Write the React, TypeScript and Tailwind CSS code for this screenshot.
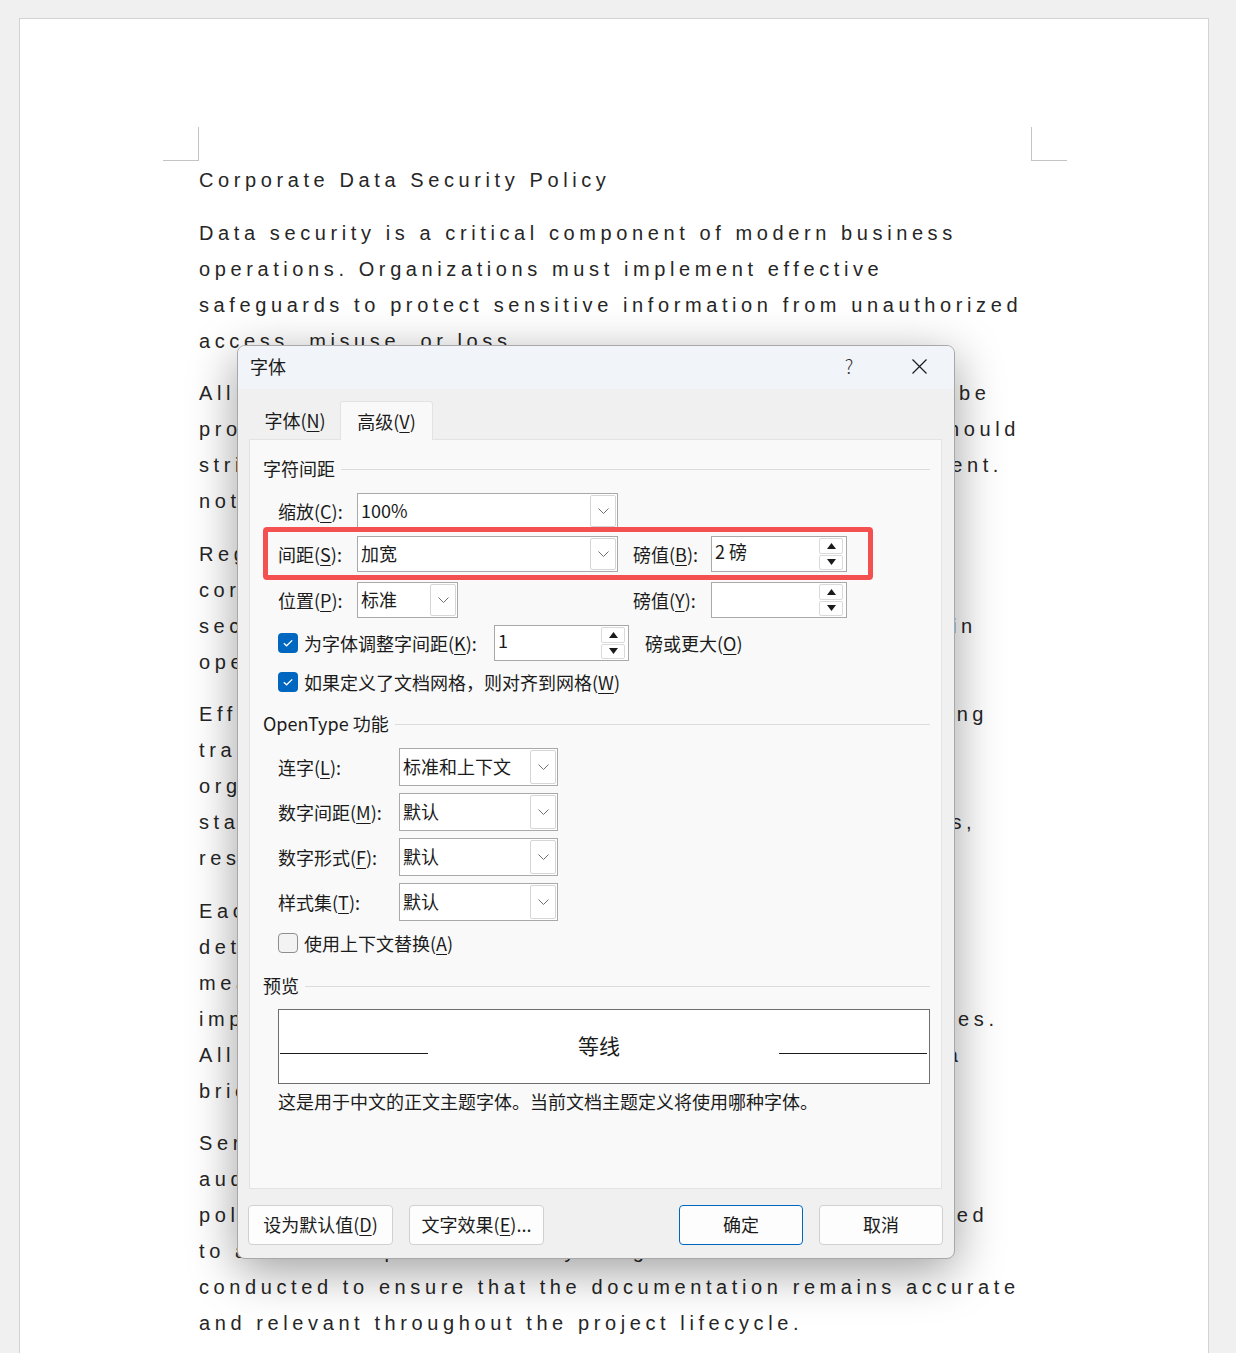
import React from "react";

const paragraphs: string[][] = [
  [
    "Data security is a critical component of modern business",
    "operations. Organizations must implement effective",
    "safeguards to protect sensitive information from unauthorized",
    "access, misuse, or loss.",
  ],
  [
    "All sensitive records stored on the company server must be",
    "protected by encryption, and access to restricted files should",
    "strictly follow the rules given by the IT security department.",
    "notice of every change must be given to the team.",
  ],
  [
    "Regular training helps employees recognize threats and",
    "correctly respond to incidents that may affect the",
    "security of company systems, both inside the office and in",
    "open or remote working environments.",
  ],
  [
    "Effective access control needs a clear process for granting",
    "transparent permissions, so that every member of the",
    "organization only sees data relevant to their role.",
    "standard reviews of user rights are required for all teams,",
    "restricting privileges when roles change.",
  ],
  [
    "Each department should appoint a data steward who is",
    "determined to monitor compliance and report any",
    "measures that fail to protect information assets or",
    "improve the way all teams follow established security rules.",
    "All incidents must be recorded and reported quickly via a",
    "brief written summary to the security team.",
  ],
  [
    "Service providers who handle our data must pass an",
    "audit before contracts are signed, and the security",
    "policies that apply to them should be clearly communicated",
    "to authorized personnel only. Regular reviews should be",
    "conducted to ensure that the documentation remains accurate",
    "and relevant throughout the project lifecycle.",
  ],
];

function Key({ k }: { k: string }) {
  return <span className="underline underline-offset-[3px]">{k}</span>;
}

function Chevron() {
  return (
    <svg width="11" height="6" viewBox="0 0 11 6" fill="none" stroke="#707070" strokeWidth="1">
      <path d="M0.5 0.5 L5.5 5.5 L10.5 0.5" />
    </svg>
  );
}

function Combo({ value, className }: { value: string; className: string }) {
  return (
    <div className={"flex border border-[#a9a9a9] bg-white " + className}>
      <span className="flex flex-1 items-center pb-[3px] pl-[3px]">{value}</span>
      <span className="my-[1px] mr-[1px] flex w-[26px] items-center justify-center rounded-[2px] border border-[#d6d6d6] bg-white">
        <Chevron />
      </span>
    </div>
  );
}

function Spin({ value, className }: { value: string; className: string }) {
  return (
    <div className={"flex border border-[#a9a9a9] bg-white " + className}>
      <span className="flex flex-1 items-center pb-[6px] pl-[3px]">{value}</span>
      <span className="my-[1px] mr-[3px] flex w-[24px] flex-col gap-[1px]">
        <span className="flex flex-1 items-center justify-center rounded-[2px] border border-[#dadada]">
          <svg width="9" height="6" viewBox="0 0 9 6">
            <path d="M0 6 L4.5 0 L9 6 Z" fill="#1b1b1b" />
          </svg>
        </span>
        <span className="flex flex-1 items-center justify-center rounded-[2px] border border-[#dadada]">
          <svg width="9" height="6" viewBox="0 0 9 6">
            <path d="M0 0 L4.5 6 L9 0 Z" fill="#1b1b1b" />
          </svg>
        </span>
      </span>
    </div>
  );
}

function Check({ on }: { on: boolean }) {
  if (!on) {
    return <span className="h-[20px] w-[20px] shrink-0 rounded-[4px] border border-[#8f8f8f] bg-[#f3f3f3]" />;
  }
  return (
    <span className="flex h-[20px] w-[20px] shrink-0 items-center justify-center rounded-[4px] bg-[#0067c0]">
      <svg width="20" height="20" viewBox="0 0 20 20" fill="none" stroke="white" strokeWidth="1.3">
        <path d="M5.8 10.2 L8.6 12.8 L14.2 7.4" />
      </svg>
    </span>
  );
}

function Group({ title }: { title: string }) {
  return (
    <div className="flex h-[24px] items-center gap-[6px]">
      <span className="-mt-[2px]">{title}</span>
      <span className="h-px flex-1 bg-[#dcdcdc]" />
    </div>
  );
}

function FontDialog() {
  return (
    <div className="absolute left-[237px] top-[345px] flex h-[914px] w-[718px] flex-col overflow-hidden rounded-[8px] border border-[#a8a8a8] bg-[#f0f0f0] font-['Noto_Sans_CJK_SC',sans-serif] text-[18px] leading-[24px] text-[#1b1b1b] shadow-[0_12px_48px_rgba(0,0,0,0.38)]">
      <div className="flex h-[43px] shrink-0 items-center bg-[#f1f4f9] pb-[3px] pl-[12px]">
        <span>字体</span>
        <span className="ml-auto mr-[53px] w-[20px] text-center text-[19px] font-light text-[#333]">?</span>
        <svg className="mr-[27px]" width="15" height="15" viewBox="0 0 15 15" stroke="#1b1b1b" strokeWidth="1.2">
          <path d="M0.5 0.5 L14.5 14.5 M14.5 0.5 L0.5 14.5" />
        </svg>
      </div>

      <div className="flex h-[50px] shrink-0 items-end pl-[12px]">
        <div className="flex h-[38px] w-[90px] items-center justify-center pb-[1px]">
          字体(<Key k="N" />)
        </div>
        <div className="relative z-10 -mb-px flex h-[39px] w-[93px] items-center justify-center rounded-t-[3px] border border-b-0 border-[#e3e3e3] bg-[#f9f9f9]">
          高级(<Key k="V" />)
        </div>
      </div>

      <div className="relative ml-[11px] mr-[12px] flex h-[750px] shrink-0 flex-col border border-[#e3e3e3] bg-[#f9f9f9] pl-[13px] pr-[11px] pt-[17px]">
        <Group title="字符间距" />

        <div className="mt-[12px] flex h-[36px] items-center pl-[15px]">
          <span className="w-[79px]">
            缩放(<Key k="C" />):
          </span>
          <Combo value="100%" className="h-[36px] w-[261px]" />
        </div>

        <div className="mt-[7px] flex h-[36px] items-center pl-[15px]">
          <span className="w-[79px]">
            间距(<Key k="S" />):
          </span>
          <Combo value="加宽" className="h-[36px] w-[261px]" />
          <span className="ml-[15px] w-[78px]">
            磅值(<Key k="B" />):
          </span>
          <Spin value="2 磅" className="h-[36px] w-[136px]" />
        </div>

        <div className="mt-[10px] flex h-[36px] items-center pl-[15px]">
          <span className="w-[79px]">
            位置(<Key k="P" />):
          </span>
          <div className="w-[261px]">
            <Combo value="标准" className="h-[36px] w-[101px]" />
          </div>
          <span className="ml-[15px] w-[78px]">
            磅值(<Key k="Y" />):
          </span>
          <Spin value="" className="h-[36px] w-[136px]" />
        </div>

        <div className="mt-[7px] flex h-[36px] items-center pl-[15px]">
          <Check on />
          <span className="ml-[6px] w-[190px]">
            为字体调整字间距(<Key k="K" />):
          </span>
          <Spin value="1" className="h-[36px] w-[135px]" />
          <span className="ml-[16px]">
            磅或更大(<Key k="O" />)
          </span>
        </div>

        <div className="mt-[3px] flex h-[36px] items-center pl-[15px]">
          <Check on />
          <span className="ml-[6px]">
            如果定义了文档网格，则对齐到网格(<Key k="W" />)
          </span>
        </div>

        <div className="mt-[12px]">
          <Group title="OpenType 功能" />
        </div>

        {[
          { label: "连字", k: "L", value: "标准和上下文", mt: "mt-[12px]" },
          { label: "数字间距", k: "M", value: "默认", mt: "mt-[7px]" },
          { label: "数字形式", k: "F", value: "默认", mt: "mt-[7px]" },
          { label: "样式集", k: "T", value: "默认", mt: "mt-[7px]" },
        ].map((row) => (
          <div key={row.k} className={"flex h-[38px] items-center pl-[15px] " + row.mt}>
            <span className="w-[121px]">
              {row.label}(<Key k={row.k} />):
            </span>
            <Combo value={row.value} className="h-[38px] w-[159px]" />
          </div>
        ))}

        <div className="mt-[10px] flex h-[24px] items-center pl-[15px]">
          <Check on={false} />
          <span className="ml-[6px]">
            使用上下文替换(<Key k="A" />)
          </span>
        </div>

        <div className="mt-[19px]">
          <Group title="预览" />
        </div>

        <div className="ml-[15px] mt-[11px] flex h-[75px] items-start border border-[#6e6e6e] bg-white">
          <span className="ml-px mt-[43px] h-px w-[148px] bg-[#1b1b1b]" />
          <span className="flex h-full flex-1 items-center justify-center pb-[4px] pr-[9px] text-[21px]">等线</span>
          <span className="mr-[2px] mt-[43px] h-px w-[148px] bg-[#1b1b1b]" />
        </div>

        <div className="ml-[15px] mt-[5px]">这是用于中文的正文主题字体。当前文档主题定义将使用哪种字体。</div>

        <div className="absolute left-[13px] top-[87px] h-[53px] w-[610px] rounded-[4px] border-[5px] border-[#f55050]" />
      </div>

      <div className="flex pl-[10px] pr-[11px] pt-[16px]">
        <button className="flex h-[40px] w-[145px] items-center justify-center rounded-[4px] border border-[#d0d0d0] bg-[#fdfdfd] pb-[3px]">
          设为默认值(<Key k="D" />)
        </button>
        <button className="ml-[16px] flex h-[40px] w-[135px] items-center justify-center rounded-[4px] border border-[#d0d0d0] bg-[#fdfdfd] pb-[3px]">
          文字效果(<Key k="E" />)...
        </button>
        <button className="ml-auto flex h-[40px] w-[124px] items-center justify-center rounded-[4px] border border-[#0067c0] bg-[#fdfdfd] pb-[3px]">
          确定
        </button>
        <button className="ml-[16px] flex h-[40px] w-[124px] items-center justify-center rounded-[4px] border border-[#d0d0d0] bg-[#fdfdfd] pb-[3px]">
          取消
        </button>
      </div>
    </div>
  );
}

export default function App() {
  return (
    <div className="relative h-[1353px] w-[1236px] overflow-hidden bg-[#f0f0f0] pl-[19px] pt-[18px]">
      <div className="h-[1400px] w-[1190px] border border-[#d3d3d3] bg-white">
        <div className="flex pt-[108px]">
          <div className="ml-[143px] h-[34px] w-[36px] border-b border-r border-[#c4c4c4]" />
          <div className="ml-auto mr-[141px] h-[34px] w-[36px] border-b border-l border-[#c4c4c4]" />
        </div>
        <div className="ml-[179px] mt-px font-['Liberation_Sans',sans-serif] text-[20px] leading-[36px] tracking-[4.6px] text-[#262626]">
          <div className="whitespace-nowrap">Corporate Data Security Policy</div>
          {paragraphs.map((p, i) => (
            <div key={i} className="mt-[16.5px]">
              {p.map((line) => (
                <div key={line} className="whitespace-nowrap">
                  {line}
                </div>
              ))}
            </div>
          ))}
        </div>
      </div>
      <FontDialog />
    </div>
  );
}
